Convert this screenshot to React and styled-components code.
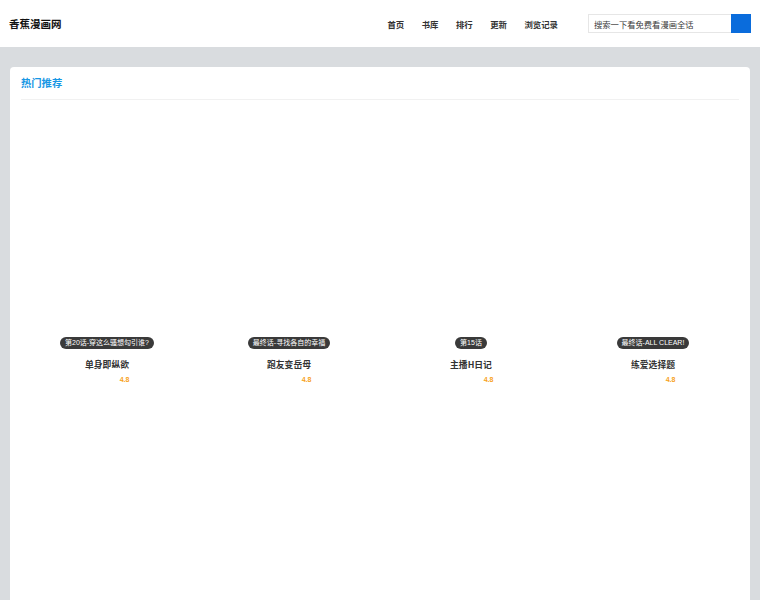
import React from "react";
import styled, { createGlobalStyle } from "styled-components";

const Global = createGlobalStyle`
  html, body { margin: 0; padding: 0; background: #d9dcdf; }
  body { font-family: "Liberation Sans", "Noto Sans CJK SC", sans-serif; color: #333; }
  * { box-sizing: border-box; }
`;

const Header = styled.header`
  height: 47px;
  background: #fff;
  display: flex;
  align-items: center;
  padding: 0 9px 0 9px;
`;

const Logo = styled.div`
  font-size: 10.5px;
  font-weight: 700;
  color: #111;
  font-family: "Noto Sans CJK SC", sans-serif;
`;

const Nav = styled.nav`
  margin-left: auto;
  display: flex;
  gap: 17.5px;
  margin-right: 30px;
  margin-top: 1px;
`;

const NavLink = styled.a`
  font-size: 8.4px;
  font-weight: 700;
  color: #333;
  text-decoration: none;
  font-family: "Noto Sans CJK SC", sans-serif;
`;

const Search = styled.form`
  display: flex;
  height: 19px;
`;

const SearchInput = styled.input`
  width: 143px;
  height: 19px;
  border: 1px solid #e6e6e6;
  border-right: none;
  padding: 0 0 0 5px;
  font-size: 8.3px;
  font-family: "Noto Sans CJK SC", sans-serif;
  outline: none;
  &::placeholder { color: #3a3a3a; }
`;

const SearchButton = styled.button`
  width: 20px;
  height: 19px;
  border: none;
  background: #0a6cdc;
  padding: 0;
`;

const Main = styled.main`
  padding: 20px 10px 0;
`;

const Card = styled.section`
  background: #fff;
  border-radius: 4px 4px 0 0;
  padding: 0 11px;
  min-height: 560px;
`;

const CardTitle = styled.h2`
  margin: 0;
  padding: 9px 0 0;
  height: 33px;
  line-height: 13px;
  font-size: 10.3px;
  font-weight: 700;
  color: #1797e4;
  font-family: "Noto Sans CJK SC", sans-serif;
  border-bottom: 1.5px solid #f1f1f1;
`;

const Grid = styled.div`
  display: grid;
  grid-template-columns: repeat(4, 1fr);
  margin: 5px -5px 0;
`;

const Item = styled.div`
  display: flex;
  flex-direction: column;
  align-items: center;
`;

const Cover = styled.div`
  width: 100%;
  height: 232px;
`;

const Badge = styled.span`
  height: 12px;
  line-height: 12px;
  padding: 0 5px;
  border-radius: 6px;
  background: #3a3a3a;
  color: #fff;
  font-size: 7px;
  font-family: "Liberation Sans", "Noto Sans CJK SC", sans-serif;
  white-space: nowrap;
`;

const Title = styled.div`
  margin-top: 10px;
  line-height: 12px;
  font-size: 8.8px;
  font-weight: 700;
  color: #333;
  font-family: "Noto Sans CJK SC", sans-serif;
`;

const Rating = styled.div`
  margin-top: 4px;
  padding-left: 35px;
  line-height: 10px;
  font-size: 7px;
  font-weight: 700;
  color: #f7a21b;
`;

const items = [
  { badge: "第20话-穿这么骚想勾引谁?", title: "单身即纵欲", rate: "4.8" },
  { badge: "最终话-寻找各自的幸福", title: "跑友变岳母", rate: "4.8" },
  { badge: "第15话", title: "主播H日记", rate: "4.8" },
  { badge: "最终话-ALL CLEAR!", title: "练爱选择题", rate: "4.8" },
];

export default function App() {
  return (
    <>
      <Global />
      <Header>
        <Logo>香蕉漫画网</Logo>
        <Nav>
          <NavLink href="#">首页</NavLink>
          <NavLink href="#">书库</NavLink>
          <NavLink href="#">排行</NavLink>
          <NavLink href="#">更新</NavLink>
          <NavLink href="#">浏览记录</NavLink>
        </Nav>
        <Search onSubmit={(e) => e.preventDefault()}>
          <SearchInput placeholder="搜索一下看免费看漫画全话" />
          <SearchButton type="submit" aria-label="搜索" />
        </Search>
      </Header>
      <Main>
        <Card>
          <CardTitle>热门推荐</CardTitle>
          <Grid>
            {items.map((it) => (
              <Item key={it.title}>
                <Cover />
                <Badge>{it.badge}</Badge>
                <Title>{it.title}</Title>
                <Rating>{it.rate}</Rating>
              </Item>
            ))}
          </Grid>
        </Card>
      </Main>
    </>
  );
}
